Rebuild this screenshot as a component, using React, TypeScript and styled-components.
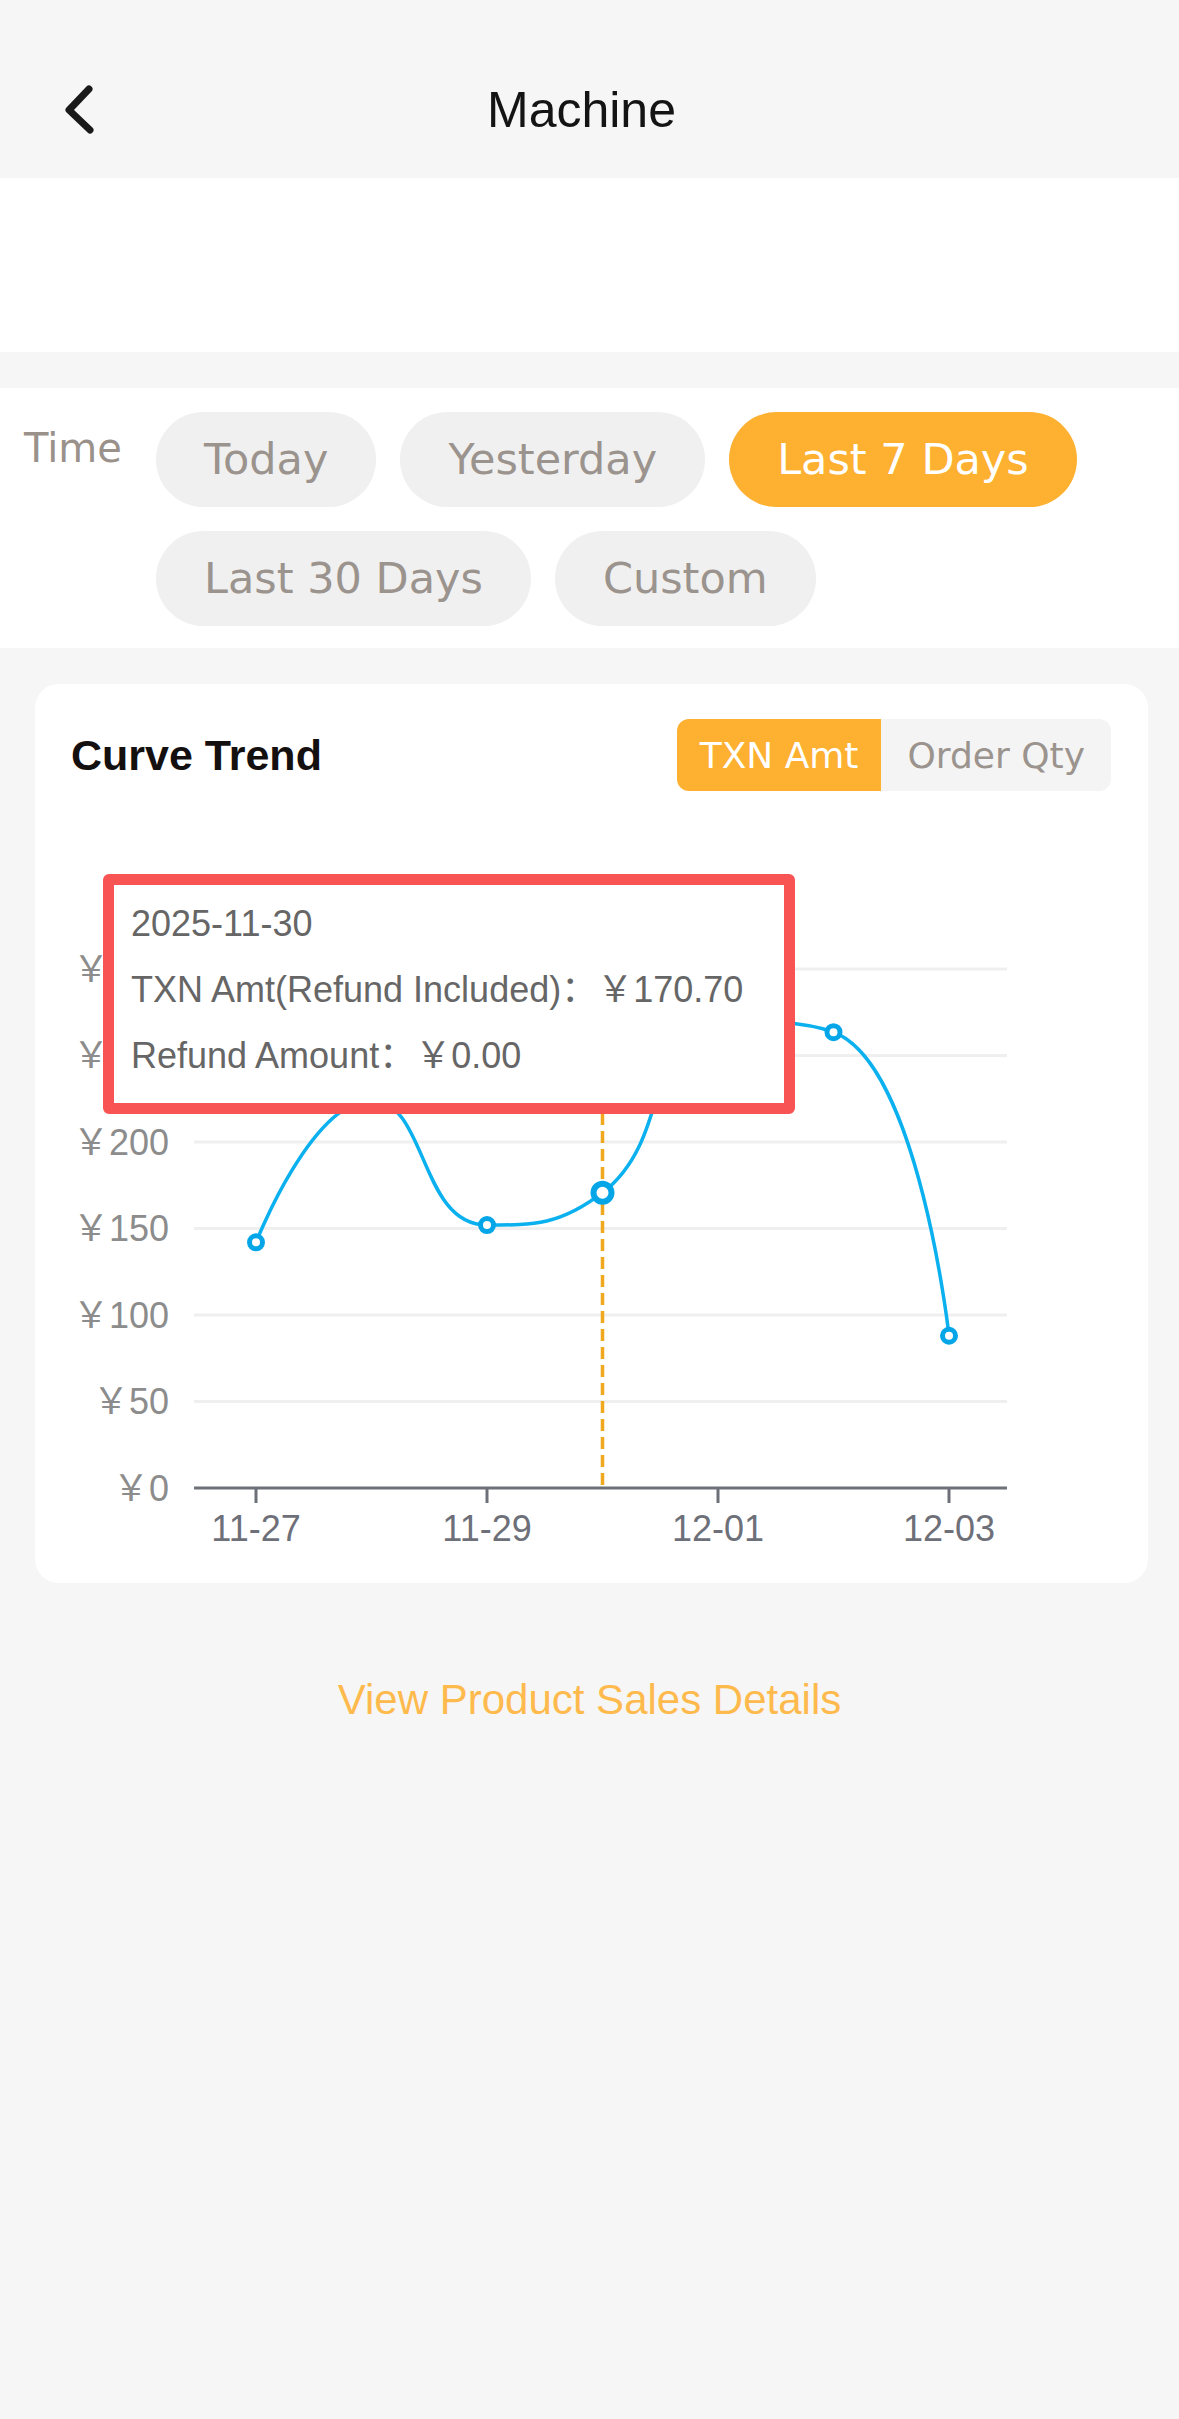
import React from "react";
import styled, { createGlobalStyle } from "styled-components";

const GlobalStyle = createGlobalStyle`
  html, body { margin: 0; padding: 0; background: #f6f6f6; }
  body { font-family: "Liberation Sans", "Noto Sans CJK SC", sans-serif; }
  * { box-sizing: border-box; }
`;

const Page = styled.div`
  width: 1179px;
  min-height: 2419px;
  background: #f6f6f6;
  display: flex;
  flex-direction: column;
`;

const Header = styled.header`
  height: 178px;
  padding-top: 80px;
  background: #f6f6f6;
`;

const NavRow = styled.div`
  height: 60px;
  display: grid;
  grid-template-columns: 1fr auto 1fr;
  align-items: center;
`;

const BackButton = styled.button`
  justify-self: start;
  margin-left: 62px;
  width: 32px;
  height: 52px;
  padding: 0;
  border: none;
  background: none;
  display: flex;
`;

const Title = styled.h1`
  margin: 0 16px 0 0;
  font-family: "Liberation Sans", sans-serif;
  font-size: 50px;
  font-weight: 400;
  line-height: 60px;
  color: #141414;
`;

const Banner = styled.div`
  height: 174px;
  background: #fff;
`;

const FilterSection = styled.section`
  margin-top: 36px;
  background: #fff;
  padding: 24px 0 22px;
  display: flex;
  align-items: flex-start;
`;

const FilterLabel = styled.div`
  flex: 0 0 156px;
  padding-left: 24px;
  padding-top: 12px;
  font-family: "DejaVu Sans", sans-serif;
  font-size: 40px;
  line-height: 48px;
  color: #9a918b;
`;

const PillGroup = styled.div`
  flex: 1;
  display: flex;
  flex-wrap: wrap;
  gap: 24px;
  padding-right: 20px;
`;

const Pill = styled.button<{ $active?: boolean }>`
  height: 95px;
  padding: 0 48px;
  border: none;
  border-radius: 48px;
  font-family: "DejaVu Sans", sans-serif;
  font-size: 43px;
  line-height: 95px;
  background: ${(p) => (p.$active ? "#feb031" : "#f0f0f0")};
  color: ${(p) => (p.$active ? "#ffffff" : "#9b938d")};
`;

const Card = styled.section`
  margin: 36px 31px 0 35px;
  width: 1113px;
  background: #fff;
  border-radius: 24px;
  overflow: hidden;
`;

const CardHeader = styled.div`
  padding: 35px 37px 0 36px;
  height: 107px;
  display: flex;
  align-items: center;
  justify-content: space-between;
`;

const CardTitle = styled.h2`
  margin: 0;
  font-family: "Liberation Sans", sans-serif;
  font-weight: 700;
  font-size: 43px;
  color: #151010;
`;

const Toggle = styled.div`
  display: flex;
  height: 72px;
  border-radius: 12px;
  overflow: hidden;
`;

const ToggleItem = styled.button<{ $active?: boolean }>`
  border: none;
  height: 72px;
  padding: ${(p) => (p.$active ? "0 23px" : "0 26px")};
  font-family: "DejaVu Sans", sans-serif;
  font-size: 36px;
  background: ${(p) => (p.$active ? "#feb031" : "#f4f4f4")};
  color: ${(p) => (p.$active ? "#ffffff" : "#9b938d")};
`;

const ChartWrap = styled.div`
  position: relative;
  height: 792px;
`;

const ChartSvg = styled.svg`
  display: block;
  font-family: "Liberation Sans", "Noto Sans CJK SC", sans-serif;
`;

const Tooltip = styled.div`
  position: absolute;
  left: 68px;
  top: 83px;
  width: 692px;
  height: 240px;
  border: 11px solid #f95454;
  border-radius: 6px;
  background: #fff;
  padding: 6px 17px;
  font-family: "Liberation Sans", "Noto Sans CJK SC", sans-serif;
  font-size: 36px;
  line-height: 66px;
  color: #666;
  white-space: nowrap;
`;

const TooltipLine = styled.div``;

const DetailsLink = styled.a`
  margin-top: 91px;
  text-align: center;
  font-family: "Liberation Sans", sans-serif;
  font-size: 42px;
  line-height: 52px;
  color: #ffba4d;
  text-decoration: none;
`;

const ranges = ["Today", "Yesterday", "Last 7 Days", "Last 30 Days", "Custom"];
const dates = ["11-27", "11-28", "11-29", "11-30", "12-01", "12-02", "12-03"];
const values = [142, 224, 152, 170.7, 270, 263.5, 88];

const X0 = 256;
const XSTEP = 115.5;
const AXIS_Y = 1488;
const PX_PER_UNIT = 1.73;
const GRID_LEFT = 194;
const GRID_RIGHT = 1007;
const HOVER = 3;

const px = (i: number) => X0 + i * XSTEP;
const py = (v: number) => AXIS_Y - v * PX_PER_UNIT;

function smoothPath(pts: [number, number][], smooth = 0.5): string {
  let d = "";
  let prevX = 0, prevY = 0, cpx0 = 0, cpy0 = 0;
  const n = pts.length;
  for (let k = 0; k < n; k++) {
    const [x, y] = pts[k];
    if (k === 0) {
      d += `M${x},${y}`;
      cpx0 = x;
      cpy0 = y;
    } else {
      let cpx1: number, cpy1: number, nextCpx0: number, nextCpy0: number;
      if (k === n - 1) {
        cpx1 = x;
        cpy1 = y;
        nextCpx0 = x;
        nextCpy0 = y;
      } else {
        const [nextX, nextY] = pts[k + 1];
        let vx = nextX - prevX;
        let vy = nextY - prevY;
        const dx0 = x - prevX, dx1 = nextX - x, dy0 = y - prevY, dy1 = nextY - y;
        const lenPrev = Math.sqrt(dx0 * dx0 + dy0 * dy0);
        const lenNext = Math.sqrt(dx1 * dx1 + dy1 * dy1);
        const ratio = lenNext / (lenNext + lenPrev);
        nextCpx0 = x + vx * smooth * ratio;
        nextCpy0 = y + vy * smooth * ratio;
        nextCpx0 = Math.min(nextCpx0, Math.max(nextX, x));
        nextCpy0 = Math.min(nextCpy0, Math.max(nextY, y));
        nextCpx0 = Math.max(nextCpx0, Math.min(nextX, x));
        nextCpy0 = Math.max(nextCpy0, Math.min(nextY, y));
        vx = nextCpx0 - x;
        vy = nextCpy0 - y;
        cpx1 = x - (vx * lenPrev) / lenNext;
        cpy1 = y - (vy * lenPrev) / lenNext;
        cpx1 = Math.min(cpx1, Math.max(prevX, x));
        cpy1 = Math.min(cpy1, Math.max(prevY, y));
        cpx1 = Math.max(cpx1, Math.min(prevX, x));
        cpy1 = Math.max(cpy1, Math.min(prevY, y));
        vx = x - cpx1;
        vy = y - cpy1;
        nextCpx0 = x + (vx * lenNext) / lenPrev;
        nextCpy0 = y + (vy * lenNext) / lenPrev;
      }
      d += ` C${cpx0},${cpy0} ${cpx1},${cpy1} ${x},${y}`;
      cpx0 = nextCpx0;
      cpy0 = nextCpy0;
    }
    prevX = x;
    prevY = y;
  }
  return d;
}

function TrendChart() {
  const pts = values.map((v, i) => [px(i), py(v)] as [number, number]);
  const gridValues = [0, 50, 100, 150, 200, 250, 300];
  return (
    <ChartSvg width={1113} height={792} viewBox="35 791 1113 792">
      {gridValues.slice(1).map((v) => (
        <line key={v} x1={GRID_LEFT} x2={GRID_RIGHT} y1={py(v)} y2={py(v)} stroke="#efefef" strokeWidth={3} />
      ))}
      {gridValues.map((v) => (
        <text key={v} x={169} y={py(v)} textAnchor="end" dominantBaseline="central" fontSize={36} fill="#8c8c8c">
          {`￥${v}`}
        </text>
      ))}
      <line x1={px(HOVER)} x2={px(HOVER)} y1={py(300)} y2={AXIS_Y} stroke="#f0a81f" strokeWidth={3.5} strokeDasharray="12 6" />
      <line x1={GRID_LEFT} x2={GRID_RIGHT} y1={AXIS_Y} y2={AXIS_Y} stroke="#6e7079" strokeWidth={3} />
      {dates.map((d, i) =>
        i % 2 === 0 ? (
          <g key={d}>
            <line x1={px(i)} x2={px(i)} y1={AXIS_Y} y2={AXIS_Y + 15} stroke="#6e7079" strokeWidth={3} />
            <text x={px(i)} y={1528} textAnchor="middle" dominantBaseline="central" fontSize={36} fill="#6e7079">
              {d}
            </text>
          </g>
        ) : null
      )}
      <path d={smoothPath(pts)} fill="none" stroke="#0bb0ef" strokeWidth={3.5} />
      {pts.map(([x, y], i) => (
        <circle
          key={i}
          cx={x}
          cy={y}
          r={i === HOVER ? 9 : 6.5}
          fill="#fff"
          stroke="#04a6e8"
          strokeWidth={i === HOVER ? 6 : 5}
        />
      ))}
    </ChartSvg>
  );
}

export default function App() {
  return (
    <>
      <GlobalStyle />
      <Page>
        <Header>
          <NavRow>
            <BackButton aria-label="Back">
              <svg width="32" height="52" viewBox="0 0 32 52">
                <path d="M27 5 L7 26 L28 46" fill="none" stroke="#1a1a1a" strokeWidth={7} strokeLinecap="round" strokeLinejoin="round" />
              </svg>
            </BackButton>
            <Title>Machine</Title>
            <div />
          </NavRow>
        </Header>
        <Banner />
        <FilterSection>
          <FilterLabel>Time</FilterLabel>
          <PillGroup>
            {ranges.map((r) => (
              <Pill key={r} $active={r === "Last 7 Days"}>
                {r}
              </Pill>
            ))}
          </PillGroup>
        </FilterSection>
        <Card>
          <CardHeader>
            <CardTitle>Curve Trend</CardTitle>
            <Toggle>
              <ToggleItem $active>TXN Amt</ToggleItem>
              <ToggleItem>Order Qty</ToggleItem>
            </Toggle>
          </CardHeader>
          <ChartWrap>
            <TrendChart />
            <Tooltip>
              <TooltipLine>2025-11-30</TooltipLine>
              <TooltipLine>TXN Amt(Refund Included)：￥170.70</TooltipLine>
              <TooltipLine>Refund Amount：￥0.00</TooltipLine>
            </Tooltip>
          </ChartWrap>
        </Card>
        <DetailsLink href="#">View Product Sales Details</DetailsLink>
      </Page>
    </>
  );
}
